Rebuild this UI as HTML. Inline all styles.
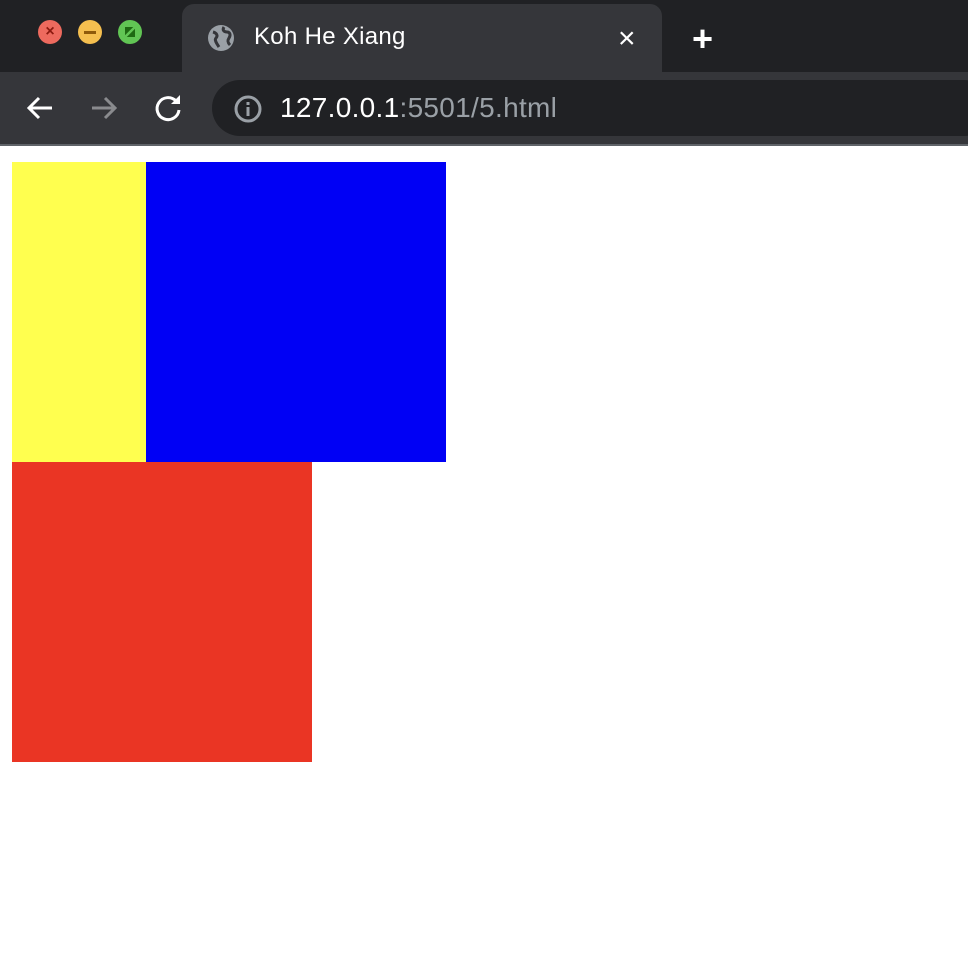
<!DOCTYPE html>
<html><head><style>
body{margin:0;width:968px;height:974px;background:#fff;position:relative;overflow:hidden;font-family:"Liberation Sans",sans-serif}
div{position:absolute}
</style></head><body>
<div style="left:0;top:0;width:968px;height:72px;background:#202124"></div>
<div style="left:182px;top:4px;width:480px;height:72px;background:#35363a;border-radius:12px 12px 0 0"></div>
<div style="left:0;top:72px;width:968px;height:72px;background:#35363a"></div>
<div style="left:38px;top:20px;width:24px;height:24px;border-radius:50%;background:#ed6a5e;color:#8c1a10;font-size:16px;line-height:24px;text-align:center;font-weight:bold">×</div>
<div style="left:78px;top:20px;width:24px;height:24px;border-radius:50%;background:#f5bf4f"><div style="left:6px;top:11px;width:12px;height:3px;background:#8f5a0a"></div></div>
<svg style="position:absolute;left:118px;top:20px" width="24" height="24" viewBox="0 0 24 24"><circle cx="12" cy="12" r="12" fill="#61c554"/><rect x="7" y="7" width="10" height="10" fill="#1e6a12"/><path d="M7 17 17 7" stroke="#61c554" stroke-width="2.5"/></svg>
<svg style="position:absolute;left:207px;top:24px" width="28" height="28" viewBox="0 0 28 28"><circle cx="14" cy="14" r="13" fill="#9aa0a6"/><path d="M6 8c4 1 5 4 3 6s1 6 3 9M17 3c-2 3 0 5 3 5s4 3 2 6-1 5 1 7" stroke="#35363a" stroke-width="3" fill="none"/></svg>
<div style="left:254px;top:23px;color:#fff;font-size:24px;letter-spacing:0.3px">Koh He Xiang</div>
<div style="left:618px;top:22px;color:#fff;font-size:30px">×</div>
<div style="left:692px;top:18px;color:#fff;font-size:36px;font-weight:bold">+</div>
<svg style="position:absolute;left:24px;top:92px" width="160" height="32" viewBox="0 0 160 32"><path d="M28 16H5M15 6 5 16l10 10" stroke="#fff" stroke-width="3" fill="none"/><path d="M68 16h23M81 6l10 10-10 10" stroke="#8a8b8e" stroke-width="3" fill="none"/><path d="M155 18a11 11 0 1 1-3-9" stroke="#fff" stroke-width="3" fill="none"/><path d="M156 3v9h-9z" fill="#fff"/></svg>
<div style="left:212px;top:80px;width:780px;height:56px;background:#202124;border-radius:28px"></div>
<svg style="position:absolute;left:233px;top:94px" width="30" height="30" viewBox="0 0 30 30"><circle cx="15" cy="15" r="12" stroke="#9aa0a6" stroke-width="3" fill="none"/><rect x="13.5" y="13" width="3" height="9" fill="#9aa0a6"/><rect x="13.5" y="8" width="3" height="3" fill="#9aa0a6"/></svg>
<div style="left:280px;top:92px;font-size:28px;letter-spacing:0.3px;color:#fff">127.0.0.1<span style="color:#9aa0a6">:5501/5.html</span></div>
<div style="left:0;top:144px;width:968px;height:2px;background:#5f6368"></div>
<div style="left:12px;top:162px;width:134px;height:300px;background:#ffff4f"></div>
<div style="left:146px;top:162px;width:300px;height:300px;background:#0000f5"></div>
<div style="left:12px;top:462px;width:300px;height:300px;background:#ea3524"></div>
</body></html>
